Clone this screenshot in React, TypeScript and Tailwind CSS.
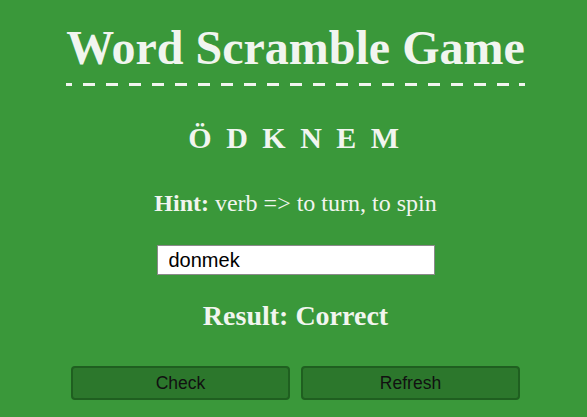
export default function App() {
  return (
    <div
      className="min-h-[417px] w-full bg-[#3a983a] pl-[4px] pt-[20px] flex flex-col items-center text-[#f1f5ef]"
      style={{ fontFamily: '"Liberation Serif", "Times New Roman", serif' }}
    >
      <div className="flex flex-col items-stretch">
        <h1 className="text-[48px] leading-[55px] font-bold whitespace-nowrap">Word Scramble Game</h1>
        <div className="mt-[8px] h-[3px] w-full bg-[repeating-linear-gradient(90deg,#f1f5ef_0_12px,transparent_12px_23px)] bg-[position:-6px_0]" />
      </div>

      <div className="mt-[35px] text-[30px] leading-[34px] font-bold tracking-[3.5px]">Ö D K N E M</div>

      <p className="mt-[34px] text-[24px] leading-[28px]">
        <span className="font-bold">Hint:</span> verb =&gt; to turn, to spin
      </p>

      <input
        readOnly
        value="donmek"
        className="mt-[28px] w-[278px] h-[30px] bg-white border border-[#8a8a8a] px-[11px] text-[20px] text-black outline-none"
        style={{ fontFamily: '"Liberation Sans", Arial, sans-serif' }}
      />

      <div className="mt-[25px] text-[28px] leading-[32px] font-bold">Result: Correct</div>

      <div
        className="mt-[34px] flex gap-[11px]"
        style={{ fontFamily: '"Liberation Sans", Arial, sans-serif' }}
      >
        <button className="w-[219px] h-[34px] rounded-[4px] border-2 border-[#1f5f20] bg-[#2c772c] text-[17.5px] text-[#111]">
          Check
        </button>
        <button className="w-[219px] h-[34px] rounded-[4px] border-2 border-[#1f5f20] bg-[#2c772c] text-[17.5px] text-[#111]">
          Refresh
        </button>
      </div>
    </div>
  );
}
